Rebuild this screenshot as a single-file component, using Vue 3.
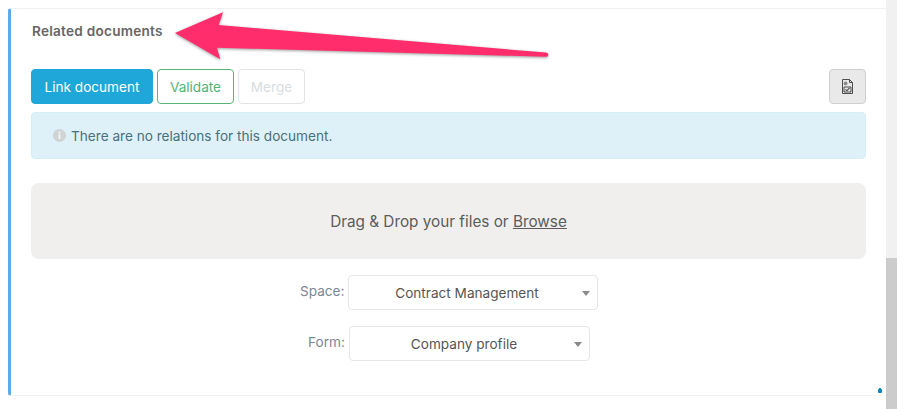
<script setup>
const fields = [
  { label: 'Space:', value: 'Contract Management', cls: 'space' },
  { label: 'Form:', value: 'Company profile', cls: 'form' },
]
</script>

<template>
  <div class="page">
    <main class="main">
      <section class="card">
        <h2 class="title">Related documents</h2>
        <div class="toolbar">
          <button class="btn primary">Link document</button>
          <button class="btn success">Validate</button>
          <button class="btn disabled">Merge</button>
          <button class="btn icon-btn" aria-label="Document">
            <svg width="11" height="15" viewBox="0 0 11 15" fill="none" stroke="#4d4d4d" stroke-width="1">
              <path d="M.5.5h7l3 3v11H.5z" />
              <path d="M7.5.5v3h3" />
              <circle cx="3.6" cy="4.4" r="1.9" fill="#8a8a8a" stroke="none" />
              <path d="M2 8h7v5H2z" />
              <path d="M3.4 10.4l1.5 1.3 2.7-2.8" stroke-width="1.1" />
            </svg>
          </button>
        </div>
        <div class="alert">
          <svg class="info" width="13" height="13" viewBox="0 0 13 13">
            <circle cx="6.5" cy="6.5" r="6.5" fill="#cfd3d4" />
            <rect x="5.6" y="5.4" width="1.8" height="4.6" fill="#f2f7f9" />
            <rect x="5.6" y="2.8" width="1.8" height="1.7" fill="#f2f7f9" />
          </svg>
          <span>There are no relations for this document.</span>
        </div>
        <div class="drop">Drag &amp; Drop your files or&nbsp;<u>Browse</u></div>
        <div v-for="f in fields" :key="f.cls" class="field" :class="f.cls">
          <label class="label">{{ f.label }}</label>
          <div class="select">
            <span class="value">{{ f.value }}</span>
            <i class="caret"></i>
          </div>
        </div>
        <i class="dot"></i>
      </section>
    </main>
    <div class="scrollbar"><div class="thumb"></div></div>
    <svg class="arrow" width="907" height="409" viewBox="0 0 907 409">
      <path class="arrow-shape" d="M175 33L223 12.3L218.7 25L546 52.6Q548.5 53 548.3 55Q548 57 546 56.8L217 47.7L220.3 59.3Z" />
    </svg>
  </div>
</template>

<style scoped>
.page {
  position: relative;
  display: flex;
  width: 907px;
  height: 409px;
  overflow: hidden;
  background: #fff;
  font-family: Inter, "Liberation Sans", sans-serif;
  box-sizing: border-box;
  padding-right: 10px;
}
.main {
  flex: 1;
  padding: 8px 0 0 8px;
  min-width: 0;
}
.card {
  position: relative;
  box-sizing: border-box;
  height: 388px;
  background: #fff;
  border-left: 3px solid #5fabea;
  border-top: 1px solid #f1f1f1;
  border-bottom: 1px solid #f1f1f1;
  border-radius: 3px 0 3px 3px;
  padding: 0 20px;
}
.title {
  margin: 14px 0 0 1px;
  font-size: 13.6px;
  line-height: 16px;
  font-weight: 600;
  color: #666;
  letter-spacing: 0.25px;
}
.toolbar {
  display: flex;
  gap: 4px;
  margin-top: 30px;
}
.btn {
  box-sizing: border-box;
  height: 35px;
  border-radius: 4px;
  font: 400 13.6px Inter, "Liberation Sans", sans-serif;
  background: #fff;
  padding: 0;
}
.primary {
  width: 122px;
  background: #1fa7d9;
  border: 1px solid #1fa7d9;
  color: #fff;
}
.success {
  width: 77px;
  border: 1px solid #5cb377;
  color: #4fb574;
}
.disabled {
  width: 67px;
  border: 1px solid #e1e4e6;
  color: #d9dde0;
}
.icon-btn {
  width: 37px;
  margin-left: auto;
  background: #e9e9e9;
  border: 1px solid #cfcfcf;
  display: flex;
  align-items: center;
  justify-content: center;
}
.alert {
  box-sizing: border-box;
  height: 47px;
  margin-top: 8px;
  display: flex;
  align-items: center;
  gap: 5px;
  padding-left: 21px;
  background: #dff1f8;
  border: 1px solid #d5edf6;
  border-radius: 4px;
  color: #47707d;
  font-size: 13.6px;
}
.drop {
  height: 76px;
  margin-top: 24px;
  display: flex;
  align-items: center;
  justify-content: center;
  background: #f0efed;
  border-radius: 8px;
  color: #5c5c5c;
  font-size: 15.3px;
}
.field {
  display: flex;
  align-items: center;
}
.space { margin: 16px 0 0 269px; }
.form { margin: 16px 0 0 277px; }
.label {
  color: #7b8894;
  font-size: 13.6px;
  width: 48px;
  margin-top: -3px;
}
.form .label { width: 41px; }
.select {
  position: relative;
  box-sizing: border-box;
  height: 35px;
  border: 1px solid #e6e6e6;
  border-radius: 4px;
  display: flex;
  align-items: center;
  justify-content: center;
  color: #555;
  font-size: 13.6px;
  background: #fff;
}
.space .select { width: 250px; padding-right: 12px; }
.form .select { width: 241px; padding-right: 11px; }
.caret {
  position: absolute;
  right: 7px;
  top: 15px;
  width: 0;
  height: 0;
  border-left: 4px solid transparent;
  border-right: 4px solid transparent;
  border-top: 5px solid #8a8a8a;
}
.dot {
  position: absolute;
  right: 4px;
  bottom: 2px;
  width: 4px;
  height: 4px;
  background: #0b87b5;
  border-radius: 1px;
}
.dot::before {
  content: "";
  position: absolute;
  left: 1px;
  top: -1px;
  width: 2px;
  height: 1px;
  background: #0b87b5;
}
.scrollbar {
  flex: 0 0 11px;
  background: #f1f1f1;
  display: flex;
  flex-direction: column;
  justify-content: flex-end;
}
.thumb {
  height: 151px;
  background: #cccccc;
}
.arrow {
  position: absolute;
  inset: 0;
  pointer-events: none;
}
.arrow-shape {
  fill: #ff2d6b;
  filter: drop-shadow(0 1.5px 1.5px rgba(0, 0, 0, 0.4));
}
</style>
